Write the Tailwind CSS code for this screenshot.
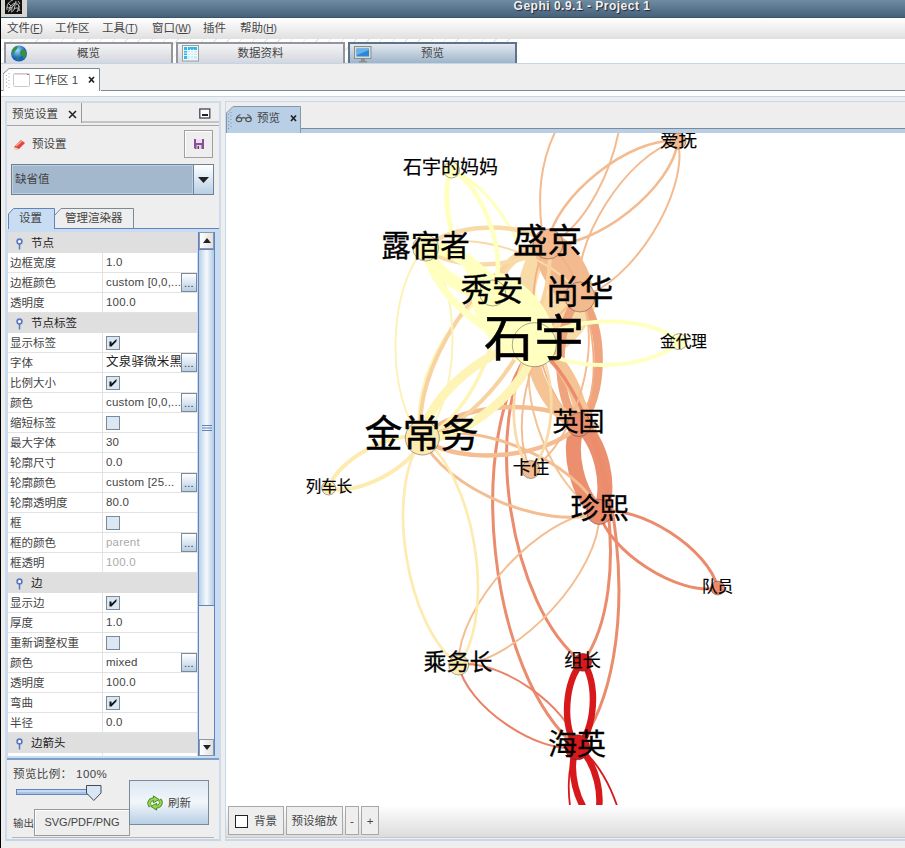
<!DOCTYPE html>
<html lang="zh">
<head>
<meta charset="utf-8">
<title>Gephi 0.9.1 - Project 1</title>
<script src="https://cdn.jsdelivr.net/npm/@tailwindcss/browser@4"></script>
</head>
<body class="w-[905px] h-[848px] overflow-hidden bg-[#eeeeee] border-l border-black font-['Liberation_Sans','Noto_Sans_CJK_SC',sans-serif] text-[11.5px] text-[#444] leading-none">
<div class="flex flex-col h-[848px] whitespace-nowrap">

  <!-- title bar -->
  <header class="flex h-[18px] bg-linear-to-b from-[#6f8ca2] to-[#45627a] border-b border-[#36536c]">
    <div class="w-[26px] h-[17px] bg-[#d6d5d0] pl-1 shrink-0">
      <svg width="17" height="14" viewBox="0 0 17 14"><rect width="17" height="14" fill="#111"/><g fill="none" stroke="#ccc" stroke-width=".9"><path d="M2 10C1 4 5 1 8 0M4 11C4 6 8 3 12 3M2 7c4 3 8-2 9-6M6 12c5-1 2-7 6-8 3 0 2 4 0 8M9 9c3-2 5-1 6 2M3 3l3 3M3 12c2-1 3-3 3-5M13 1l2 3M7 11c-1-3 1-6 3-7M12 12c2-2 3-5 1-7"/></g></svg>
    </div>
    <div class="flex-1 flex justify-center pl-[232px] pr-0">
      <span class="text-[#f0f0f0] font-bold text-[12px] leading-[12px] tracking-[0.5px] [text-shadow:1px_1px_1px_#223]">Gephi 0.9.1 - Project 1</span>
    </div>
  </header>

  <!-- menu -->
  <nav class="flex items-center h-[21px] pl-[6px] pt-px bg-linear-to-b from-white to-[#e0e0e0]">
    <span class="w-[48px]">文件<span class="text-[10px]">(<u>F</u>)</span></span>
    <span class="w-[47px]">工作区</span>
    <span class="w-[50px]">工具<span class="text-[10px]">(<u>T</u>)</span></span>
    <span class="w-[51px]">窗口<span class="text-[10px]">(<u>W</u>)</span></span>
    <span class="w-[37px]">插件</span>
    <span>帮助<span class="text-[10px]">(<u>H</u>)</span></span>
  </nav>

  <!-- perspective switcher -->
  <div class="flex gap-[3px] h-[24px] pt-[3px] pl-[3px] bg-white bg-[repeating-linear-gradient(135deg,#fff_0px,#fff_8px,#e8e8e8_8px,#e8e8e8_9px)] bg-[length:518px_24px] bg-no-repeat">
    <div class="relative flex items-center justify-center w-[169px] pt-px border-2 border-b-0 border-[#93979c] bg-linear-to-b from-[#f4f4f5] to-[#d3d7de]">
      <svg class="absolute left-[4px] top-0" width="18" height="18" viewBox="0 0 18 18"><defs><radialGradient id="gl" cx=".4" cy=".3"><stop offset="0" stop-color="#9adcff"/><stop offset="1" stop-color="#1b62b8"/></radialGradient></defs><circle cx="9" cy="9.500" r="8" fill="url(#gl)"/><path d="M2 7c1-3 3-5 6-5l-1 3-2 2-1 3-1 2zM10 8l2-3 4 2 .500 4-2.500 4-2-4-2-1zM6 12l3 2-1 3z" fill="#38903f"/></svg>
      <span>概览</span>
    </div>
    <div class="relative flex items-center justify-center w-[169px] pt-px border-2 border-b-0 border-[#93979c] bg-linear-to-b from-[#f4f4f5] to-[#d3d7de]">
      <svg class="absolute left-[4px] top-[1px]" width="18" height="17" viewBox="0 0 18 17"><rect x=".5" y=".5" width="16" height="15.500" fill="#f4f6f6" stroke="#9a9d99"/><rect x="2" y="2" width="13" height="12" fill="#35b6ec"/><path d="M6 5h9v9H6z" fill="#c8f0fb"/><path d="M2 5.500h13M2 8h13M2 10.500h13M5.500 2v12M8.500 4v10M11.500 4v10" stroke="#fff" stroke-width=".8"/></svg>
      <span>数据资料</span>
    </div>
    <div class="relative flex items-center justify-center w-[169px] pt-px border-2 border-b-0 border-[#5d7388] bg-linear-to-b from-[#e2e9f0] to-[#9fb5ca]">
      <svg class="absolute left-[4px] top-[1px]" width="18" height="18" viewBox="0 0 18 18"><rect x=".5" y="1.500" width="16.500" height="12" fill="#dcdcd6" stroke="#8b8d88"/><rect x="2.500" y="3.500" width="12.500" height="8" fill="#2d87d6"/><path d="M3 10l12-5v-1H3z" fill="#64b3f0"/><path d="M7 14h4v2h2v1.500H5V16h2z" fill="#8e8f8b"/></svg>
      <span>预览</span>
    </div>
  </div>

  <!-- workspace tabs -->
  <div class="flex h-[28px] border-t border-[#c4d5e7] pt-[4px] bg-[#eeeeee]">
    <div class="w-[2px] border-b border-[#7a8a99]"></div>
    <svg width="98" height="23" viewBox="0 0 98 23"><path d="M0 24V6L6 .5H96.500V24" fill="#fff" stroke="#7a8a99"/><path d="M3.500 7v14M6 5v16" stroke="#aaa" stroke-dasharray="1 2.500"/><rect x="10.500" y="5.500" width="16" height="13" rx="1" fill="#fff" stroke="#c9c9c9"/><path d="M11 6.500h15" stroke="#ddd"/><path d="M24 6.500h2" stroke="#c66"/><text x="31" y="16" font-size="11.500" fill="#444">工作区 1</text><path d="M86 9l5 5.500M91 9l-5 5.500" stroke="#222" stroke-width="1.700"/></svg>
    <div class="flex-1 border-b border-[#7a8a99]"></div>
  </div>
  <div class="h-[6px] bg-white border-b border-[#c4d5e7] shrink-0"></div>

  <!-- docked windows -->
  <main class="flex flex-1 pt-[4px] pl-[4px] min-h-0">

    <section class="flex flex-col w-[216px] h-[740px] border-2 border-[#cddcec] border-b-[#c4d5e7] shrink-0 overflow-hidden">
      <div class="flex h-[20px]">
        <div class="flex items-center gap-[10px] w-[75px] border-r border-[#999] pl-[5px] pt-[3px]"><span>预览设置</span><svg width="9" height="9" viewBox="0 0 9 9"><path d="M1 1l7 7M8 1L1 8" stroke="#222" stroke-width="1.500"/></svg></div>
        <div class="flex-1 flex justify-end items-center pr-[8px] pt-[2px] border-b-2 border-[#c4c4c4]"><svg width="12" height="11" viewBox="0 0 12 11"><rect x=".8" y="1" width="10" height="9" fill="#fff" stroke="#445" stroke-width="1.300"/><path d="M3 7h6" stroke="#222" stroke-width="2"/></svg></div>
      </div>
      <div class="h-[3px] border-b border-[#a5a5a5]"></div>

      <div class="flex items-center h-[36px] pl-[6px] pr-[6px]">
        <svg width="13" height="13" viewBox="0 0 13 13"><path d="M1 9L8 2l4 3-6 6-4 1z" fill="#e5453f"/><path d="M3 8l6-5" stroke="#f8a49d" stroke-width="1.500"/><path d="M1 9l5 2-4 1z" fill="#eec"/></svg>
        <span class="ml-[6px] flex-1 pt-[2px]">预设置</span>
        <div class="flex items-center justify-center w-[29px] h-[28px] border border-[#a0a0a0] shadow-[inset_1px_1px_0_#fff]"><svg width="10" height="10" viewBox="0 0 10 10"><path d="M0 0h10v10H1L0 9z" fill="#8e4a9e"/><path d="M2 0h6v4H2z" fill="#ecdff0"/><path d="M2.500 6h5v4h-5z" fill="#d8d8e0"/><path d="M3.500 7h1.500v3H3.500z" fill="#553"/></svg></div>
      </div>

      <div class="flex ml-[4px] mt-[2px] w-[203px] h-[31px] border border-[#6f8294] bg-[#a3b8cc] shrink-0">
        <div class="flex-1 flex items-center pl-[2px] border border-[#b8cfe5]">缺省值</div>
        <div class="flex items-center justify-center w-[20px] border-l border-[#6f8294] bg-linear-to-b from-white via-[#dbe7f2] to-[#b8cfe5]"><svg width="11" height="6" viewBox="0 0 11 6"><path d="M0 0h11L5.500 6z" fill="#222"/></svg></div>
      </div>

      <svg class="mt-[13px] shrink-0" width="212" height="21" viewBox="0 0 212 21"><path d="M1.500 22V6L6.500.5H47.500V21" fill="#c8ddf2" stroke="#6382bf"/><path d="M48 7l6-6.500H126.500V20" fill="none" stroke="#7a8a99"/><path d="M47 20.500h165" stroke="#6382bf"/><text x="12" y="14" font-size="11.500" fill="#444">设置</text><text x="58" y="14" font-size="11.500" fill="#444">管理渲染器</text></svg>

      <div class="flex h-[531px] -mx-px border-[#7f9fcb] border-x border-b-2 bg-[#c8ddf2] pt-[3px] pl-px pb-[2px] shrink-0">
        <div id="props" class="w-[189px] h-full pt-px overflow-hidden bg-[#dfdfdf]"></div>
        <div class="flex flex-col w-[17px] ml-px bg-[#eeeeee] border-x border-[#6382bf]">
          <div class="flex items-center justify-center h-[17px] border border-[#8a98a8] bg-linear-to-r from-white to-[#e0e0e0]"><svg width="8" height="5" viewBox="0 0 8 5"><path d="M0 5h8L4 0z" fill="#222"/></svg></div>
          <div class="flex items-center justify-center h-[357px] border-y border-[#6382bf] bg-linear-to-r from-[#b8cfe5] via-[#f4f9fd] to-[#b3cae2]"><svg width="10" height="6" viewBox="0 0 10 6"><path d="M0 .5h10M0 3h10M0 5.500h10" stroke="#6382bf"/></svg></div>
          <div class="flex-1"></div>
          <div class="flex items-center justify-center h-[17px] border border-[#8a98a8] bg-linear-to-r from-white to-[#e0e0e0]"><svg width="8" height="5" viewBox="0 0 8 5"><path d="M0 0h8L4 5z" fill="#222"/></svg></div>
        </div>
      </div>

      <div class="flex h-[77px] shrink-0 relative">
        <div class="w-[122px] pl-[6px] pt-[7px]">
          <div class="h-[14px] leading-[14px] tracking-[0.4px]">预览比例： 100%</div>
          <svg class="ml-[3px] mt-[3px]" width="88" height="18" viewBox="0 0 88 18"><rect x=".5" y="5.500" width="76" height="5" fill="#a9c3e6" stroke="#6382bf"/><path d="M1 7h75" stroke="#e6effa"/><path d="M70.500 1.500h14.500v7.500l-7.200 7.500-7.300-7.500z" fill="#d9e7f4" stroke="#444b55"/></svg>
          <div class="flex items-center mt-[7px]">
            <span class="w-[22px] text-[10.500px] pt-[2px]">输出</span>
            <div class="w-[96px] h-[27px] shrink-0 flex items-center justify-center border border-[#999] shadow-[inset_1px_1px_0_#fff] text-[11px]">SVG/PDF/PNG</div>
          </div>
        </div>
        <div class="relative z-10 flex items-center justify-center gap-[5px] mt-[20px] w-[80px] h-[45px] border border-[#7a8a99] bg-linear-to-b from-[#dde8f3] via-[#f1f6fa] to-[#b8cfe5]">
          <svg width="16" height="16" viewBox="0 0 16 16"><g transform="rotate(-20 8 8)"><g fill="none" stroke="#3f7d1c" stroke-width="3.600"><path d="M2.500 9.500C1 5 5 2.500 9.500 4.500M13.500 6.500C15 11 11 13.500 6.500 11.500"/></g><g fill="#93d84c" stroke="#3f7d1c" stroke-width=".8"><path d="M9 .8l4 5.400-6.500 1zM7 15.200l-4-5.400 6.500-1z"/></g><g fill="none" stroke="#93d84c" stroke-width="2.200"><path d="M2.500 9C1.500 5 5 2.500 9.500 4.500M13.500 7C14.500 11 11 13.500 6.500 11.500"/></g></g></svg>
          <span class="pt-[2px]">刷新</span>
        </div>
      </div>
      <div class="mx-[5px] border-t border-[#b5b5b5] shrink-0"></div>
    </section>

    <section class="flex flex-col flex-1 ml-[4px] h-[740px] min-w-0 border-l border-t border-b-2 border-[#c8d8ea]">
      <div class="flex h-[31px] pt-[4px] bg-[#eeeeee] shrink-0">
        <svg width="75" height="27" viewBox="0 0 75 27"><path d="M.5 27V7L7 .5H74.500V27" fill="#b8cfe5" stroke="#8497ab"/><path d="M2.500 8v15M5 6v17" stroke="#7f93a8" stroke-dasharray="1 2.500"/><g fill="none" stroke="#555" stroke-width="1.200"><ellipse cx="13" cy="13.500" rx="2.700" ry="2.200"/><ellipse cx="22.500" cy="13.500" rx="2.700" ry="2.200"/><path d="M10.500 13c0-2 1.500-3.500 4-4.500M15.500 12.500c1-1 3-1 4.500 0M25.200 13c0-2-1.500-3.500-4-4.500"/></g><text x="31" y="15.500" font-size="11.500" fill="#444">预览</text><path d="M65 9.500l5 5.500M70 9.500l-5 5.500" stroke="#222" stroke-width="1.700"/></svg>
        <div class="flex-1 flex flex-col justify-end"><div class="h-[5px] border-t border-[#7a8a99] bg-[#b8cfe5]"></div></div>
      </div>
      <svg id="graph" class="bg-white shrink-0" width="679" height="672" viewBox="226 133 679 672" font-family="'Noto Sans CJK SC',sans-serif"></svg>
      <div class="flex gap-[2px] h-[33px] pt-px pl-[2px] bg-linear-to-b from-white to-[#dcdcdc] border-b border-[#c8c8c8] shrink-0">
        <div class="flex items-center justify-center gap-[6px] w-[56px] h-[29px] pt-[2px] border border-[#a8a8a8] bg-[#eeeeee]"><span class="w-[13px] h-[13px] border border-[#222] bg-white"></span>背景</div>
        <div class="flex items-center justify-center w-[57px] h-[29px] pt-[2px] border border-[#a8a8a8] bg-[#eeeeee]">预设缩放</div>
        <div class="flex items-center justify-center w-[14px] h-[29px] pt-[2px] border border-[#a8a8a8] bg-[#eeeeee]">-</div>
        <div class="flex items-center justify-center w-[18px] h-[29px] pt-[2px] border border-[#a8a8a8] bg-[#eeeeee]">+</div>
      </div>
    </section>
  </main>
</div>

<script>
// Property sheet: [label] is a group; [label, value, has "..." button, disabled]
const rows = [
  ['节点'], ['边框宽度','1.0'], ['边框颜色','custom [0,0,...',1], ['透明度','100.0'],
  ['节点标签'], ['显示标签',true], ['字体','文泉驿微米黑',1], ['比例大小',true], ['颜色','custom [0,0,...',1],
  ['缩短标签',false], ['最大字体','30'], ['轮廓尺寸','0.0'], ['轮廓颜色','custom [25...',1], ['轮廓透明度','80.0'],
  ['框',false], ['框的颜色','parent',1,1], ['框透明','100.0',0,1],
  ['边'], ['显示边',true], ['厚度','1.0'], ['重新调整权重',false], ['颜色','mixed',1], ['透明度','100.0'],
  ['弯曲',true], ['半径','0.0'], ['边箭头'], ['','']
];
const check = on => `<svg width="14" height="14" viewBox="0 0 14 14"><rect x=".5" y=".5" width="13" height="13" fill="#dbe7f2" stroke="#7a8a99"/>${on ? '<path d="M3.500 5.500h2v2.200L10.500 3v2.200L5.500 10.500h-2z" fill="#111"/>' : ''}</svg>`;
document.getElementById('props').innerHTML = rows.map(([l, v, b, d]) => v === undefined
  ? `<div class="flex items-center h-[20px] bg-[#dfdfdf] pl-[8px] pt-[2px] text-[#222]"><svg width="7" height="12" viewBox="0 0 7 12"><circle cx="3.500" cy="3.500" r="2.400" fill="#fff" stroke="#5878c0" stroke-width="1.600"/><path d="M3.500 6v5.500" stroke="#5878c0" stroke-width="1.500"/></svg><span class="ml-[8px]">${l}</span></div>`
  : `<div class="flex h-[20px] bg-white border-b border-[#e2e2e2]"><div class="flex items-center w-[95px] pl-[2px] pt-[3px] border-r border-[#e2e2e2]">${l}</div><div class="flex items-center flex-1 pl-[3px] min-w-0 overflow-hidden tracking-[0.2px] ${d ? 'text-[#aaa]' : ''} ${v === '文泉驿微米黑' ? 'text-[12.500px] leading-[17px] text-[#222]' : ''}">${typeof v === 'boolean' ? check(v) : `<span class="flex-1 overflow-hidden">${v}</span>`}${b ? '<span class="w-[16px] h-[19px] shrink-0 border border-[#7a8a99] bg-linear-to-b from-white to-[#b8cfe5] text-center text-[11px] leading-[18px] text-[#333]">...</span>' : ''}</div></div>`).join('');

// name: x, y, radius, fill, label, label centre x, label centre y, label size
const N = {
  ma:[451.500,170,8,'#ffffbf','石宇的妈妈',450.500,167,19], lu:[425.700,248,13,'#fdf8b9','露宿者',425.500,245,29.500],
  sj:[548,244,15,'#f4ba8f','盛京',547.500,239.500,34.500], xa:[492.700,293,13,'#ffffbf','秀安',492,289.500,31.500],
  sh:[580,297,15,'#f4ba8f','尚华',579.500,291.500,34], sy:[534.300,344.700,22,'#ffffbf','石宇',534,337,50],
  af:[678,141,8,'#f4ba8f','爱抚',678.500,139.500,18.500], jd:[679,341.700,8,'#ffffbf','金代理',683.500,341.500,15.600],
  yg:[579,424.500,12,'#ec8f6f','英国',578.500,421.500,26], kz:[530.700,469.500,9,'#f4ba8f','卡住',531,467.500,18.300],
  zx:[599.300,512,12.500,'#ec8b6b','珍熙',599.500,508,29], dy:[717.700,588,7,'#ec8b6b','队员',717.500,586.500,15.600],
  jc:[422.300,438,17,'#fdebb0','金常务',421.500,432.500,38], lc:[328.700,488,7,'#fdebb0','列车长',329,486.500,15.500],
  cw:[458.700,665,10,'#fdebb0','乘务长',458,661.500,23], zz:[582.700,662.300,9,'#d7191c','组长',582.500,660,18.300],
  hy:[577.300,747.300,12.500,'#d7191c','海英',577,743.500,29], b1:[595,820,10,'#d7191c'], b2:[618,900,8,'#d7191c']
};
const E = [
  ['ma','sy',3,'#ffffbf'],['sj','sy',18,'#f9dba8'],['sh','sy',32,'#f9dba8'],['sj','xa',9,'#f9dba8'],['sj','sh',24,'#f4ba8f'],
  ['sh','yg',8.500,'#f0a47e'],['sj','yg',1.800,'#f3b087'],['sy','yg',13,'#f5c495'],
  ['sy','zx',2,'#f5c495'],['yg','zx',15,'#ec8f6f'],
  ['sj','af',2.500,'#f4bb90'],['sh','af',2,'#f4bb90'],
  ['sy','hy',3,'#eb8c6d'],['sy','zz',3,'#eb8c6d'],
  ['jc','yg',4.500,'#f4be92'],['jc','zx',3,'#f4be92'],['zx','cw',2,'#f4be92'],
  ['zx','dy',3,'#ec8b6b'],['kz','sh',1.900,'#f4bb90'],['kz','sy',2.700,'#f9dba8'],
  ['sh','lu',2,'#f9dba8'],['jc','xa',3.500,'#fdf4b6'],['jc','sj',4,'#f8d3a0'],['lu','sj',4.500,'#f9dba8'],
  ['jc','lu',1.900,'#fdf2b6'],['jc','sy',9,'#fdf4b6'],
  ['jc','lc',4,'#fdebb0'],['jc','cw',2.700,'#fdebb0'],
  ['lu','xa',13,'#ffffbf'],['lu','sy',7,'#ffffbf'],['xa','sy',42,'#ffffbf'],
  ['ma','xa',4.500,'#ffffbf'],['sy','jd',4,'#ffffbf'],
  ['cw','hy',2,'#ea8066'],['zz','hy',6.500,'#d7191c'],['hy','b1',6.500,'#d7191c'],['hy','b2',1.800,'#d7191c']
];
// Each tie is drawn as two cubic arcs, one on each side of the straight line.
const arc = (a, b, s) => {
  const dx = (b[0]-a[0])*.2, dy = (b[1]-a[1])*.2, nx = dy*s, ny = -dx*s;
  return `M${a[0]} ${a[1]}C${a[0]+dx+nx} ${a[1]+dy+ny} ${b[0]-dx+nx} ${b[1]-dy+ny} ${b[0]} ${b[1]}`;
};
let out = '<g fill="none" stroke="#f4bb90" stroke-width="2"><path d="M542 232C538 198 539 165 556 130"/><path d="M560 238C588 218 611 172 619 130"/></g><g fill="none">';
for (const [a, b, w, c] of E) out += `<path d="${arc(N[a],N[b],1)}${arc(N[a],N[b],-1)}" stroke="${c}" stroke-width="${w}"/>`;
out += '</g>';
for (const n of Object.values(N)) out += `<circle cx="${n[0]}" cy="${n[1]}" r="${n[2]}" fill="${n[3]}" stroke="#333" stroke-opacity=".6" stroke-width=".7"/>`;
for (const n of Object.values(N)) if (n[4]) out += `<text x="${n[5]}" y="${n[6]+n[7]*.38}" font-size="${n[7]}" text-anchor="middle" fill="#000" stroke="#000" stroke-width="${n[7]*.012}">${n[4]}</text>`;
document.getElementById('graph').innerHTML = out;
</script>
</body>
</html>
